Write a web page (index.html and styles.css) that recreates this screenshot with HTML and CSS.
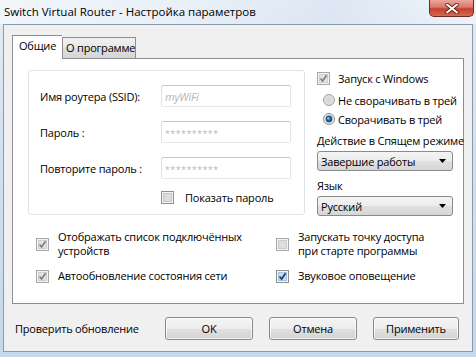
FILE: index.html
```html
<!DOCTYPE html>
<html lang="ru">
<head>
<meta charset="utf-8">
<title>Switch Virtual Router</title>
<link rel="stylesheet" href="styles.css">
</head>
<body>
<div class="window">
  <div class="titlebar">
    <span class="title">Switch Virtual Router - Настройка параметров</span>
    <div class="close">
      <svg width="14" height="11" viewBox="0 0 14 11"><path d="M2 1.5 L12 9.5 M12 1.5 L2 9.5" stroke="#5a1d16" stroke-width="3.6" stroke-linecap="round"/><path d="M2 1.5 L12 9.5 M12 1.5 L2 9.5" stroke="#ffffff" stroke-width="2" stroke-linecap="round"/></svg>
    </div>
  </div>
  <div class="client">
    <div class="tabs">
      <div class="tab active">Общие</div>
      <div class="tab">О программе</div>
    </div>
    <div class="panel">
      <div class="toprow">
        <div class="group">
          <div class="form">
            <span class="label">Имя роутера (SSID):</span>
            <div class="input"><span class="ph">myWiFi</span></div>
            <span class="label">Пароль :</span>
            <div class="input"><span class="stars">**********</span></div>
            <span class="label">Повторите пароль :</span>
            <div class="input"><span class="stars">**********</span></div>
          </div>
          <div class="check showpw">
            <svg class="cb" width="13" height="13" viewBox="0 0 13 13"><rect x="0.5" y="0.5" width="12" height="12" fill="#f4f4f4" stroke="#8e8f8f"/><rect x="2.5" y="2.5" width="8" height="8" fill="#dcdcdc" stroke="#c6c6c6"/></svg>
            <span>Показать пароль</span>
          </div>
        </div>
        <div class="side">
          <div class="check autorun">
            <svg class="cb" width="13" height="13" viewBox="0 0 13 13"><rect x="0.5" y="0.5" width="12" height="12" fill="#f2f2f2" stroke="#a8a8a8"/><rect x="2.5" y="2.5" width="8" height="8" fill="#e2e2e2" stroke="#d0d0d0"/><path d="M3.5 6.5 L5.6 9 L9.6 3.3" fill="none" stroke="#7a7a7a" stroke-width="1.6"/></svg>
            <span>Запуск с Windows</span>
          </div>
          <div class="radio r1">
            <svg width="12" height="12" viewBox="0 0 12 12"><circle cx="6" cy="6" r="5.5" fill="#e6e6e6" stroke="#9a9a9a"/><circle cx="6" cy="6" r="3.8" fill="#d8d8d8"/></svg>
            <span>Не сворачивать в трей</span>
          </div>
          <div class="radio r2">
            <svg width="12" height="12" viewBox="0 0 12 12"><circle cx="6" cy="6" r="5.5" fill="#e9e9e9" stroke="#8e8e8e"/><circle cx="6" cy="6" r="3.4" fill="#1d5a8c"/><circle cx="5.4" cy="5.4" r="1.4" fill="#7fb4e0"/></svg>
            <span>Сворачивать в трей</span>
          </div>
          <span class="sidelabel l1">Действие в Спящем режиме</span>
          <div class="combo">
            <span>Завершие работы</span>
            <svg width="7" height="4" viewBox="0 0 7 4"><path d="M0 0 H7 L3.5 4 Z" fill="#000"/></svg>
          </div>
          <span class="sidelabel l2">Язык</span>
          <div class="combo">
            <span>Русский</span>
            <svg width="7" height="4" viewBox="0 0 7 4"><path d="M0 0 H7 L3.5 4 Z" fill="#000"/></svg>
          </div>
        </div>
      </div>
      <div class="options">
        <div class="check opt">
          <svg class="cb" width="13" height="13" viewBox="0 0 13 13"><rect x="0.5" y="0.5" width="12" height="12" fill="#f2f2f2" stroke="#a8a8a8"/><rect x="2.5" y="2.5" width="8" height="8" fill="#e2e2e2" stroke="#d0d0d0"/><path d="M3.5 6.5 L5.6 9 L9.6 3.3" fill="none" stroke="#7a7a7a" stroke-width="1.6"/></svg>
          <span>Отображать список подключённых<br>устройств</span>
        </div>
        <div class="check opt">
          <svg class="cb" width="13" height="13" viewBox="0 0 13 13"><rect x="0.5" y="0.5" width="12" height="12" fill="#f4f4f4" stroke="#a8a8a8"/><rect x="2.5" y="2.5" width="8" height="8" fill="#dedede" stroke="#cccccc"/></svg>
          <span>Запускать точку доступа<br>при старте программы</span>
        </div>
        <div class="check opt">
          <svg class="cb" width="13" height="13" viewBox="0 0 13 13"><rect x="0.5" y="0.5" width="12" height="12" fill="#f2f2f2" stroke="#a8a8a8"/><rect x="2.5" y="2.5" width="8" height="8" fill="#e2e2e2" stroke="#d0d0d0"/><path d="M3.5 6.5 L5.6 9 L9.6 3.3" fill="none" stroke="#7a7a7a" stroke-width="1.6"/></svg>
          <span>Автообновление состояния сети</span>
        </div>
        <div class="check opt">
          <svg class="cb" width="13" height="13" viewBox="0 0 13 13"><rect x="0.5" y="0.5" width="12" height="12" fill="#f4f6f8" stroke="#8e8f8f"/><rect x="2.5" y="2.5" width="8" height="8" fill="#c9dcef" stroke="#a9c2dc"/><path d="M3.5 6.5 L5.6 9 L9.6 3.3" fill="none" stroke="#1e3f74" stroke-width="1.8"/></svg>
          <span>Звуковое оповещение</span>
        </div>
      </div>
    </div>
    <div class="footer">
      <span class="update">Проверить обновление</span>
      <div class="btn ok">OK</div>
      <div class="btn">Отмена</div>
      <div class="btn apply">Применить</div>
    </div>
  </div>
</div>
</body>
</html>
```
FILE: styles.css
```css
html, body {
  margin: 0;
  padding: 0;
}
body {
  width: 476px;
  height: 357px;
  overflow: hidden;
  font-family: "Open Sans", "Noto Sans", sans-serif;
  font-size: 11px;
  letter-spacing: -0.2px;
  color: #000;
  background: linear-gradient(180deg, #e3ecf6 0%, #d2e1f0 40%, #c6d8ec 100%);
}
.window {
  width: 476px;
  height: 357px;
  display: flex;
  flex-direction: column;
}
.titlebar {
  height: 24px;
  display: flex;
  align-items: flex-start;
  background: linear-gradient(90deg, rgba(255,255,255,0.55) 0%, rgba(255,255,255,0.2) 40%, rgba(200,215,235,0.2) 70%, rgba(255,255,255,0.4) 100%);
}
.title {
  padding-left: 4px;
  line-height: 24px;
  font-size: 11.5px;
  letter-spacing: 0;
  color: #000;
  white-space: nowrap;
}
.close {
  margin-left: auto;
  margin-right: 2px;
  width: 45px;
  height: 17px;
  box-sizing: border-box;
  border: 1px solid #6b2b22;
  border-top: none;
  border-radius: 0 0 5px 5px;
  background: linear-gradient(180deg, #e9a79a 0%, #d9786a 45%, #c5402c 55%, #d66a52 100%);
  display: flex;
  align-items: center;
  justify-content: center;
}
.client {
  box-sizing: border-box;
  margin: 0 3px 0 3px;
  height: 328px;
  border: 1px solid #8a9aae;
  background: #f0f0f0;
  padding: 10px 0 0 8px;
}
.tabs {
  display: flex;
  align-items: flex-end;
  height: 23px;
  position: relative;
  z-index: 2;
}
.tab {
  box-sizing: border-box;
  height: 21px;
  width: 74px;
  border: 1px solid #8c8e94;
  border-left: none;
  border-bottom: none;
  background: linear-gradient(180deg, #f0f0f0 0%, #e8e8e8 50%, #dedede 51%, #d6d6d6 100%);
  padding-left: 3px;
  line-height: 20px;
  white-space: nowrap;
}
.tab.active {
  height: 24px;
  width: 50px;
  margin-bottom: -1px;
  border-left: 1px solid #8c8e94;
  border-right: none;
  background: #ffffff;
  padding-left: 6px;
  line-height: 19px;
}
.tab.active + .tab {
  border-left: 1px solid #8c8e94;
}
.panel {
  box-sizing: border-box;
  width: 452px;
  height: 246px;
  border: 1px solid #8c8e94;
  background: #ffffff;
  padding: 11px 0 0 15px;
  position: relative;
  z-index: 1;
}
.toprow {
  display: flex;
}
.group {
  box-sizing: border-box;
  width: 277px;
  height: 145px;
  border: 1px solid #dde3e8;
  border-radius: 3px;
  padding: 14px 0 0 11px;
}
.form {
  display: grid;
  grid-template-columns: 121px 130px;
  grid-auto-rows: 22px;
  row-gap: 14px;
  align-items: center;
}
.label {
  white-space: nowrap;
}
.input {
  box-sizing: border-box;
  height: 22px;
  border: 1px solid;
  border-color: #c4c6ca #e0e3e7 #e6e8eb #dcdfe3;
  border-radius: 2px;
  background: #fff;
  padding-left: 3px;
  display: flex;
  align-items: center;
  color: #b4b4b4;
}
.ph {
  font-style: italic;
}
.stars {
  font-size: 9px;
  letter-spacing: 0.4px;
  color: #b8b8b8;
  padding-top: 2px;
}
.check {
  display: flex;
  align-items: center;
  white-space: nowrap;
}
.cb {
  flex: none;
}
.showpw {
  margin: 12px 0 0 121px;
  gap: 11px;
  height: 13px;
}
.side {
  margin-left: 12px;
  width: 136px;
  display: flex;
  flex-direction: column;
  align-items: flex-start;
}
.autorun {
  margin-top: 1px;
  gap: 8px;
  height: 14px;
}
.radio {
  display: flex;
  align-items: center;
  gap: 3px;
  margin-left: 6px;
  white-space: nowrap;
  height: 14px;
}
.r1 {
  margin-top: 8px;
}
.r2 {
  margin-top: 5px;
}
.sidelabel {
  white-space: nowrap;
  line-height: 14px;
}
.l1 {
  margin-top: 8px;
}
.l2 {
  margin-top: 8px;
}
.combo {
  box-sizing: border-box;
  width: 136px;
  height: 20px;
  margin-top: 3px;
  border: 1px solid #8a8a8a;
  border-radius: 3px;
  background: linear-gradient(180deg, #f4f4f4 0%, #ececec 50%, #e0e0e0 51%, #d6d6d6 100%);
  display: flex;
  align-items: center;
  justify-content: space-between;
  padding: 0 6px 0 3px;
}
.options {
  display: grid;
  grid-template-columns: 240px 170px;
  row-gap: 11px;
  margin: 14px 0 0 8px;
}
.opt {
  gap: 9px;
  line-height: 14px;
  align-items: center;
}
.footer {
  display: flex;
  align-items: center;
  margin-top: 13px;
  height: 23px;
}
.update {
  width: 150px;
  padding-left: 3px;
  white-space: nowrap;
}
.btn {
  box-sizing: border-box;
  width: 88px;
  height: 23px;
  margin-right: 16px;
  border: 1px solid #8a8a8a;
  border-radius: 3px;
  background: linear-gradient(180deg, #f4f4f4 0%, #ececec 50%, #e0e0e0 51%, #d4d4d4 100%);
  display: flex;
  align-items: center;
  justify-content: center;
  box-shadow: inset 0 0 0 1px rgba(255,255,255,0.7);
}
.apply {
  width: 86px;
  margin-right: 0;
}
```
